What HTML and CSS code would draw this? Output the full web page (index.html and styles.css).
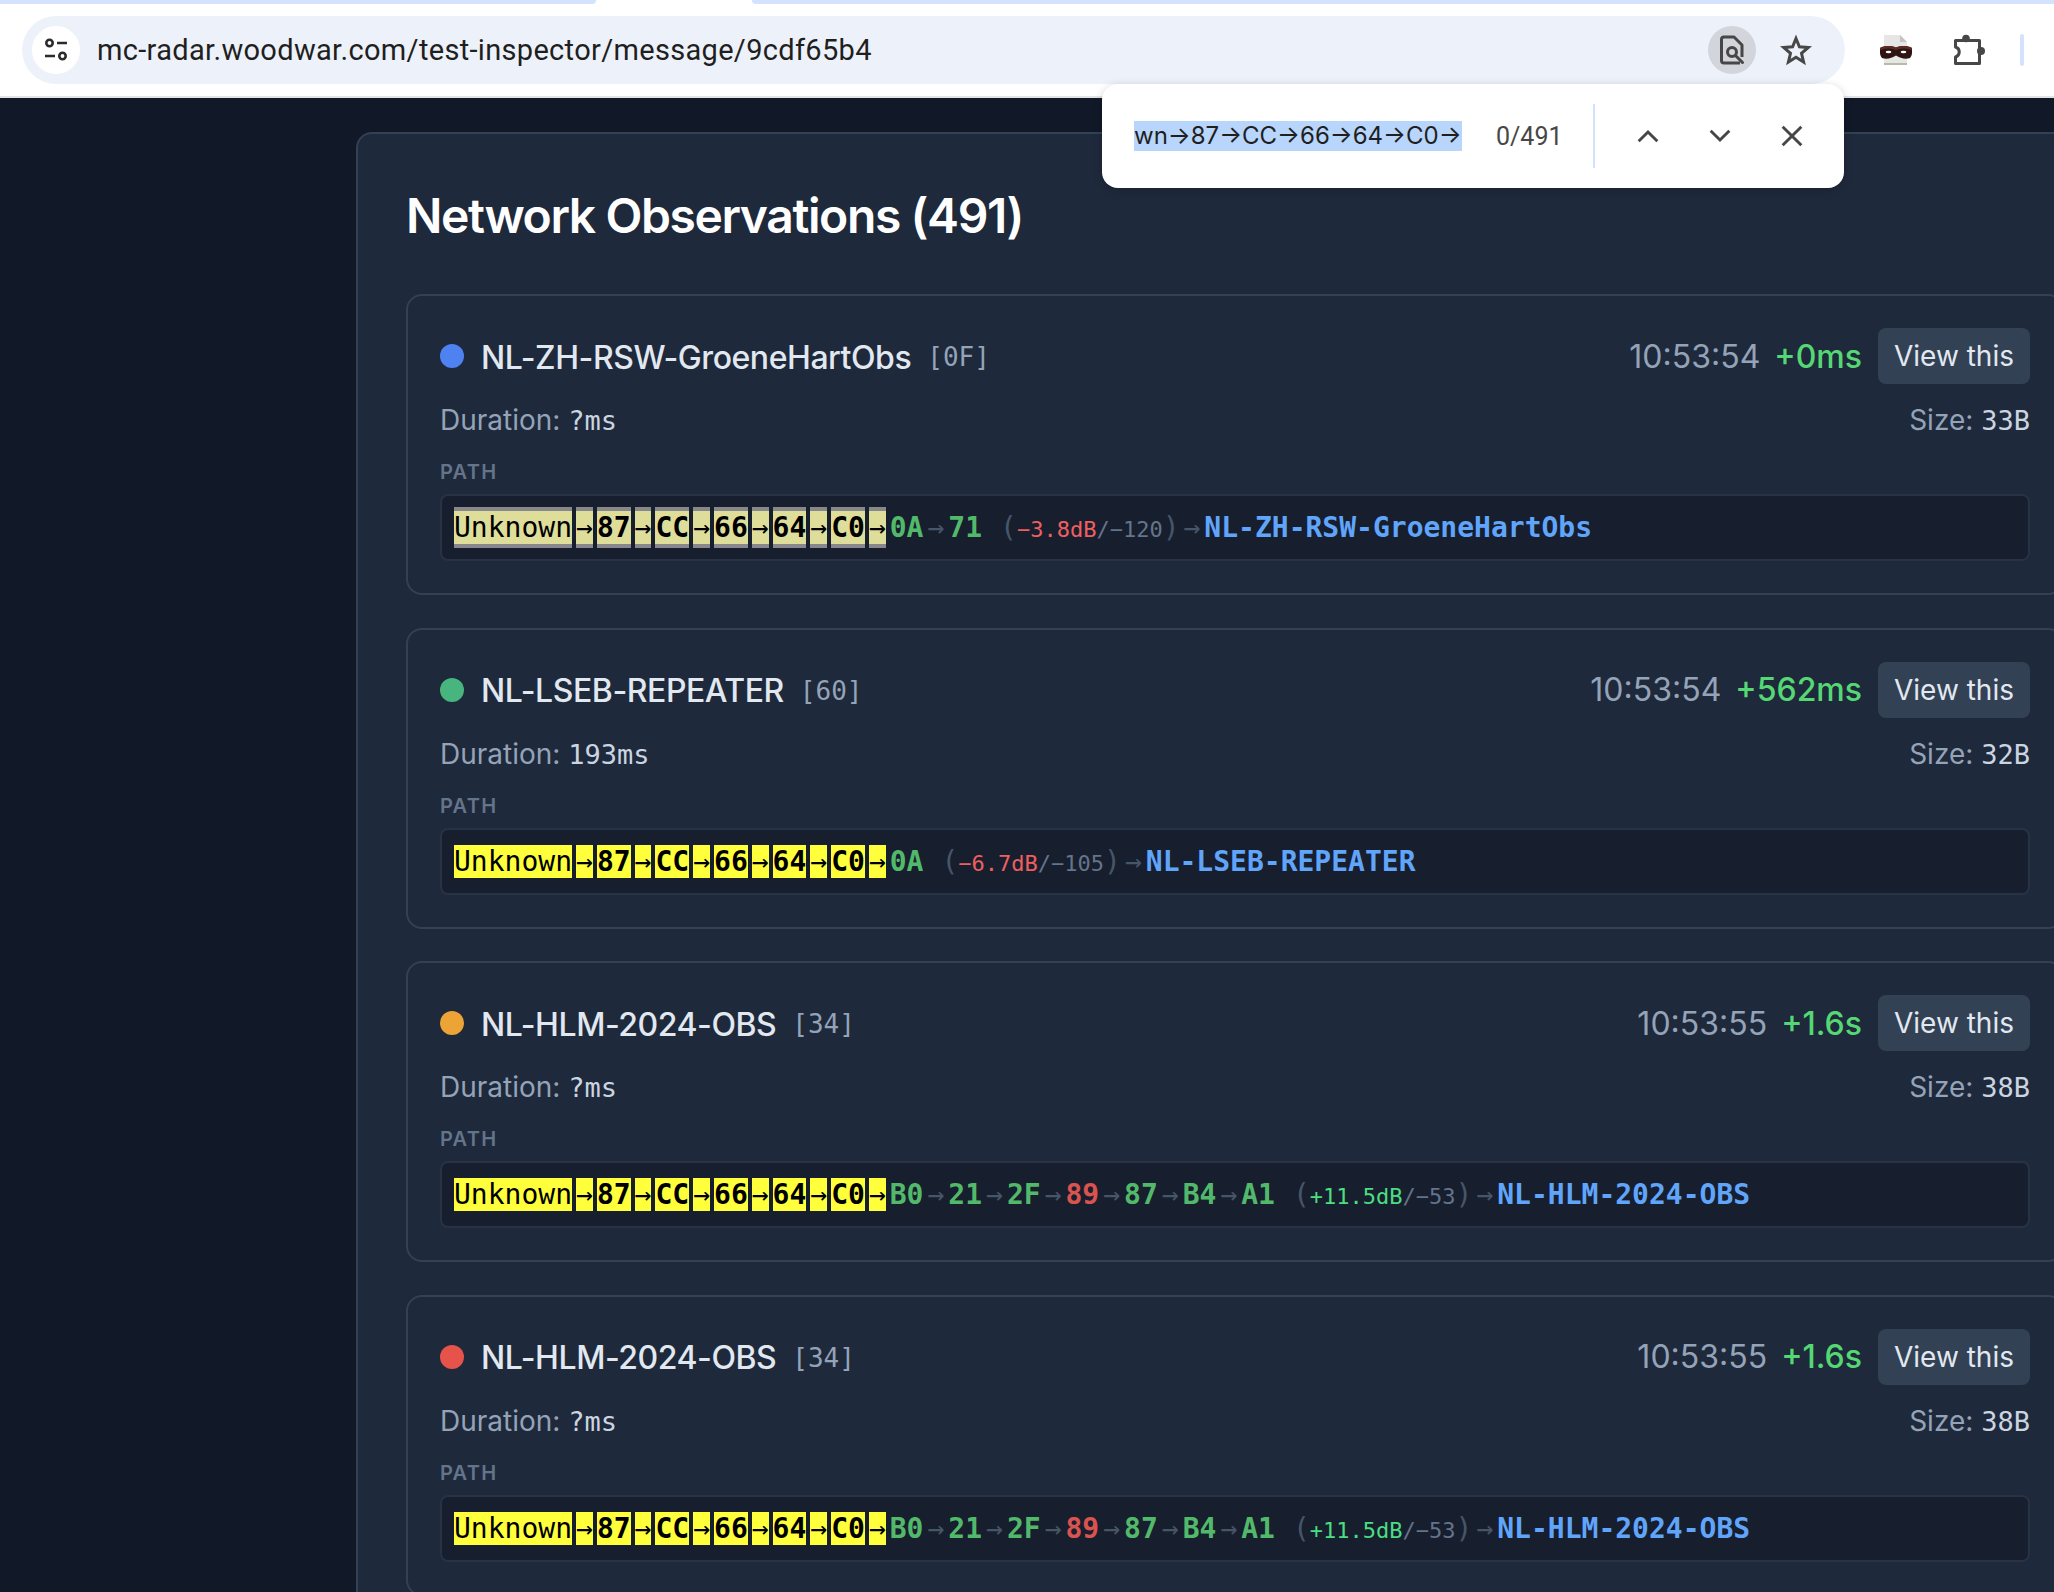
FILE: index.html
```html
<!DOCTYPE html>
<html lang="en">
<head>
    <meta charset="UTF-8">
    <meta name="viewport" content="width=device-width, initial-scale=1.0">
    <title>Test Inspector</title>
    <link rel="stylesheet" href="styles.css">
</head>
<body>
    <div class="tab-strip">
        <div class="tab-left"></div>
        <div class="tab-right"></div>
    </div>

    <header class="toolbar">
        <div class="omnibox">
            <span class="site-info">
                <svg width="24" height="24" viewBox="0 0 24 24" fill="none" stroke="#2b2b2b" stroke-width="2.600">
                    <circle cx="5.500" cy="5" r="3.200"/>
                    <path d="M13 5h10M1 18h10"/>
                    <circle cx="18.500" cy="18" r="3.200"/>
                </svg>
            </span>
            <span class="url">mc-radar.woodwar.com/test-inspector/message/9cdf65b4</span>
            <span class="reader-btn">
                <svg width="28" height="32" viewBox="0 0 28 32" fill="none" stroke="#474747" stroke-width="3" stroke-linejoin="round">
                    <path d="M22 29H6a2.500 2.500 0 0 1-2.500-2.500v-21A2.500 2.500 0 0 1 6 3h10l8 8v12"/>
                    <circle cx="14" cy="18" r="4.500"/>
                    <path d="M17.500 21.500l7 7" stroke-linecap="round"/>
                </svg>
            </span>
            <span class="star-btn">
                <svg width="32" height="32" viewBox="0 0 32 32" fill="none" stroke="#474747" stroke-width="3" stroke-linejoin="miter">
                    <path d="M16 4.500l3.400 8.300 8.900.7-6.800 5.800 2.100 8.700L16 23.300l-7.600 4.700 2.100-8.700-6.800-5.800 8.900-.7z"/>
                </svg>
            </span>
        </div>
        <div class="toolbar-icons">
            <svg class="mask-icon" width="32" height="30" viewBox="0 0 32 30">
                <path d="M4 0h16l7 7v23H4z" fill="#e6e6e6"/>
                <path d="M20 0l7 7h-7z" fill="#c4c4c4"/>
                <rect x="4" y="28" width="23" height="2" fill="#b3bea2"/>
                <path d="M0 13c5-2.500 10-2.500 16-.5 6-2 11-2 16 .5 .5 4 0 8-2 10-4 1.500-10 .5-14-2.500-4 3-10 4-14 2.500-2-2-2.500-6-2-10z" fill="#2f1512"/>
                <path d="M0 13c5-2.500 10-2.500 16-.5 6-2 11-2 16 .5v2c-5-2-10-2-16 0-6-2-11-2-16 0z" fill="#5a2a26"/>
                <ellipse cx="8.500" cy="17" rx="2.800" ry="1.300" fill="#fff"/>
                <ellipse cx="23.500" cy="17" rx="2.800" ry="1.300" fill="#fff"/>
            </svg>
            <svg class="puzzle-icon" width="34" height="32" viewBox="0 0 34 32">
                <path d="M3.500 6.500h24v23h-24v-6.500c5-1.500 5-8.500 0-10z" fill="none" stroke="#474747" stroke-width="3" stroke-linejoin="round"/>
                <circle cx="14" cy="4.500" r="3.800" fill="#474747"/>
                <circle cx="29" cy="17" r="4" fill="#474747"/>
            </svg>
            <span class="toolbar-divider"></span>
        </div>
    </header>

    <div class="find-bar">
        <span class="find-query"><span class="find-selected">wn→87→CC→66→64→C0→</span></span>
        <span class="find-count">0/491</span>
        <span class="find-divider"></span>
        <span class="find-btn">
            <svg width="32" height="32" viewBox="0 0 24 24" fill="none" stroke="#474747" stroke-width="2.200"><path d="M5 16l7-7 7 7"/></svg>
        </span>
        <span class="find-btn">
            <svg width="32" height="32" viewBox="0 0 24 24" fill="none" stroke="#474747" stroke-width="2.200"><path d="M5 8l7 7 7-7"/></svg>
        </span>
        <span class="find-btn">
            <svg width="32" height="32" viewBox="0 0 24 24" fill="none" stroke="#474747" stroke-width="2.200"><path d="M5 5l14 14M19 5L5 19"/></svg>
        </span>
    </div>

    <main class="panel">
        <h2 class="panel-title">Network Observations (491)</h2>

        <section class="obs-card">
            <div class="obs-head">
                <span class="dot dot-blue"></span>
                <span class="obs-name">NL-ZH-RSW-GroeneHartObs</span>
                <span class="obs-id">[0F]</span>
                <span class="obs-time">10:53:54</span>
                <span class="obs-delta">+0ms</span>
                <button class="view-btn">View this</button>
            </div>
            <div class="obs-meta">
                <span>Duration: <span class="meta-val">?ms</span></span>
                <span>Size: <span class="meta-val">33B</span></span>
            </div>
            <div class="path-label">PATH</div>
            <div class="path-box">
                <span class="hit dim">Unknown</span><span class="hit dim">→</span>
                <span class="hit dim hop">87</span><span class="hit dim">→</span>
                <span class="hit dim hop">CC</span><span class="hit dim">→</span>
                <span class="hit dim hop">66</span><span class="hit dim">→</span>
                <span class="hit dim hop">64</span><span class="hit dim">→</span>
                <span class="hit dim hop">C0</span><span class="hit dim">→</span>
                <span class="hop good">0A</span><span class="arrow">→</span>
                <span class="hop good">71</span>
                <span class="snr">(<span class="snr-bad">−3.8dB</span><span class="snr-rest">/−120</span>)</span>
                <span class="arrow">→</span>
                <span class="hop dest">NL-ZH-RSW-GroeneHartObs</span>
            </div>
        </section>

        <section class="obs-card">
            <div class="obs-head">
                <span class="dot dot-green"></span>
                <span class="obs-name">NL-LSEB-REPEATER</span>
                <span class="obs-id">[60]</span>
                <span class="obs-time">10:53:54</span>
                <span class="obs-delta">+562ms</span>
                <button class="view-btn">View this</button>
            </div>
            <div class="obs-meta">
                <span>Duration: <span class="meta-val">193ms</span></span>
                <span>Size: <span class="meta-val">32B</span></span>
            </div>
            <div class="path-label">PATH</div>
            <div class="path-box">
                <span class="hit">Unknown</span><span class="hit">→</span>
                <span class="hit hop">87</span><span class="hit">→</span>
                <span class="hit hop">CC</span><span class="hit">→</span>
                <span class="hit hop">66</span><span class="hit">→</span>
                <span class="hit hop">64</span><span class="hit">→</span>
                <span class="hit hop">C0</span><span class="hit">→</span>
                <span class="hop good">0A</span>
                <span class="snr">(<span class="snr-bad">−6.7dB</span><span class="snr-rest">/−105</span>)</span>
                <span class="arrow">→</span>
                <span class="hop dest">NL-LSEB-REPEATER</span>
            </div>
        </section>

        <section class="obs-card">
            <div class="obs-head">
                <span class="dot dot-orange"></span>
                <span class="obs-name">NL-HLM-2024-OBS</span>
                <span class="obs-id">[34]</span>
                <span class="obs-time">10:53:55</span>
                <span class="obs-delta">+1.6s</span>
                <button class="view-btn">View this</button>
            </div>
            <div class="obs-meta">
                <span>Duration: <span class="meta-val">?ms</span></span>
                <span>Size: <span class="meta-val">38B</span></span>
            </div>
            <div class="path-label">PATH</div>
            <div class="path-box">
                <span class="hit">Unknown</span><span class="hit">→</span>
                <span class="hit hop">87</span><span class="hit">→</span>
                <span class="hit hop">CC</span><span class="hit">→</span>
                <span class="hit hop">66</span><span class="hit">→</span>
                <span class="hit hop">64</span><span class="hit">→</span>
                <span class="hit hop">C0</span><span class="hit">→</span>
                <span class="hop good">B0</span><span class="arrow">→</span>
                <span class="hop good">21</span><span class="arrow">→</span>
                <span class="hop good">2F</span><span class="arrow">→</span>
                <span class="hop bad">89</span><span class="arrow">→</span>
                <span class="hop good">87</span><span class="arrow">→</span>
                <span class="hop good">B4</span><span class="arrow">→</span>
                <span class="hop good">A1</span>
                <span class="snr">(<span class="snr-good">+11.5dB</span><span class="snr-rest">/−53</span>)</span>
                <span class="arrow">→</span>
                <span class="hop dest">NL-HLM-2024-OBS</span>
            </div>
        </section>

        <section class="obs-card">
            <div class="obs-head">
                <span class="dot dot-red"></span>
                <span class="obs-name">NL-HLM-2024-OBS</span>
                <span class="obs-id">[34]</span>
                <span class="obs-time">10:53:55</span>
                <span class="obs-delta">+1.6s</span>
                <button class="view-btn">View this</button>
            </div>
            <div class="obs-meta">
                <span>Duration: <span class="meta-val">?ms</span></span>
                <span>Size: <span class="meta-val">38B</span></span>
            </div>
            <div class="path-label">PATH</div>
            <div class="path-box">
                <span class="hit">Unknown</span><span class="hit">→</span>
                <span class="hit hop">87</span><span class="hit">→</span>
                <span class="hit hop">CC</span><span class="hit">→</span>
                <span class="hit hop">66</span><span class="hit">→</span>
                <span class="hit hop">64</span><span class="hit">→</span>
                <span class="hit hop">C0</span><span class="hit">→</span>
                <span class="hop good">B0</span><span class="arrow">→</span>
                <span class="hop good">21</span><span class="arrow">→</span>
                <span class="hop good">2F</span><span class="arrow">→</span>
                <span class="hop bad">89</span><span class="arrow">→</span>
                <span class="hop good">87</span><span class="arrow">→</span>
                <span class="hop good">B4</span><span class="arrow">→</span>
                <span class="hop good">A1</span>
                <span class="snr">(<span class="snr-good">+11.5dB</span><span class="snr-rest">/−53</span>)</span>
                <span class="arrow">→</span>
                <span class="hop dest">NL-HLM-2024-OBS</span>
            </div>
        </section>
    </main>
</body>
</html>
```

FILE: styles.css
```css
html, body {
    margin: 0;
    height: 100%;
    overflow: hidden;
}
body {
    background-color: #111827;
    font-family: Inter, "Liberation Sans", sans-serif;
    color: #e2e8f0;
}

/* browser chrome */
.tab-strip {
    display: flex;
    justify-content: space-between;
    height: 4px;
    background-color: #fff;
}
.tab-left {
    width: 596px;
    background-color: #d3e3fd;
    border-bottom-right-radius: 8px;
}
.tab-right {
    width: 1302px;
    background-color: #d3e3fd;
    border-bottom-left-radius: 8px;
}
.toolbar {
    display: flex;
    align-items: center;
    height: 92px;
    padding-left: 22px;
    background-color: #fff;
    border-bottom: 2px solid #e2e4e6;
}
.omnibox {
    display: flex;
    align-items: center;
    width: 1823px;
    height: 68px;
    padding-left: 10px;
    padding-right: 33px;
    box-sizing: border-box;
    background-color: #edf2fa;
    border-radius: 34px;
}
.site-info {
    display: flex;
    align-items: center;
    justify-content: center;
    width: 48px;
    height: 48px;
    background-color: #fff;
    border-radius: 50%;
}
.url {
    flex: 1;
    margin-left: 17px;
    font-family: Roboto, sans-serif;
    font-size: 29px;
    letter-spacing: 0.320px;
    color: #1f1f1f;
}
.reader-btn {
    display: flex;
    align-items: center;
    justify-content: center;
    width: 48px;
    height: 48px;
    background-color: #d2d5db;
    border-radius: 50%;
}
.star-btn {
    display: flex;
    margin-left: 24px;
}
.toolbar-icons {
    display: flex;
    align-items: center;
    margin-left: 35px;
}
.puzzle-icon {
    margin-left: 40px;
}
.toolbar-divider {
    width: 4px;
    height: 32px;
    margin-left: 34px;
    background-color: #d3e3fd;
    border-radius: 2px;
}

/* find in page popup */
.find-bar {
    position: absolute;
    top: 84px;
    left: 1102px;
    display: flex;
    align-items: center;
    width: 742px;
    height: 104px;
    padding-left: 32px;
    box-sizing: border-box;
    background-color: #fff;
    border-radius: 16px;
    box-shadow: 0 2px 10px rgba(0,0,0,0.18);
    font-family: Inter, sans-serif;
    font-size: 24px;
}
.find-query {
    width: 328px;
}
.find-selected {
    display: block;
    width: 328px;
    line-height: 30px;
    background-color: #b8d5fb;
    color: #1f1f1f;
    white-space: nowrap;
    overflow: hidden;
}
.find-count {
    margin-left: 34px;
    font-family: Roboto, sans-serif;
    font-size: 25px;
    color: #474747;
}
.find-divider {
    width: 2px;
    height: 64px;
    margin-left: 30px;
    margin-right: 17px;
    background-color: #d3e3fd;
}
.find-btn {
    display: flex;
    justify-content: center;
    width: 72px;
}

/* page */
.panel {
    width: 1758px;
    margin-top: 34px;
    margin-left: 356px;
    padding: 48px 48px 0;
    box-sizing: border-box;
    background-color: #1e293b;
    border: 2px solid #334155;
    border-radius: 16px;
}
.panel-title {
    margin: 0 0 44px;
    font-size: 48px;
    font-weight: 600;
    letter-spacing: -1.400px;
    line-height: 68px;
    color: #fff;
}
.obs-card {
    margin-bottom: 32.500px;
    padding: 32px;
    background-color: #1e293b;
    border: 2px solid #334155;
    border-radius: 16px;
}
.obs-head {
    display: flex;
    align-items: center;
    height: 56px;
}
.dot {
    width: 24px;
    height: 24px;
    border-radius: 50%;
}
.dot-blue { background-color: #4f82f1; }
.dot-green { background-color: #48b47e; }
.dot-orange { background-color: #eda436; }
.dot-red { background-color: #e5534b; }
.obs-name {
    margin-left: 17px;
    padding-top: 2px;
    font-size: 32px;
    font-weight: 500;
    letter-spacing: -0.450px;
    color: #e2e8f0;
}
.obs-id {
    margin-left: 16px;
    padding-top: 2px;
    font-family: "DejaVu Sans Mono", monospace;
    font-size: 26px;
    color: #94a3b8;
}
.obs-time {
    margin-left: auto;
    font-size: 32px;
    color: #94a3b8;
}
.obs-delta {
    margin-left: 14px;
    font-size: 32px;
    font-weight: 500;
    color: #55d873;
}
.view-btn {
    height: 56px;
    width: 152px;
    margin-left: 16px;
    padding: 0;
    background-color: #334155;
    border: none;
    border-radius: 8px;
    font-family: Inter, sans-serif;
    font-size: 28px;
    color: #e2e8f0;
}
.obs-meta {
    display: flex;
    justify-content: space-between;
    height: 32px;
    margin-top: 20px;
    line-height: 32px;
    font-size: 28px;
    color: #94a3b8;
}
.meta-val {
    font-family: "DejaVu Sans Mono", monospace;
    font-size: 27px;
    color: #cbd5e1;
}
.path-label {
    margin-top: 24px;
    line-height: 24px;
    font-size: 20px;
    font-weight: 600;
    letter-spacing: 1.300px;
    color: #64748b;
}
.path-box {
    display: flex;
    align-items: baseline;
    gap: 4px;
    margin-top: 10px;
    padding: 15px 12px;
    background-color: #171e2e;
    border: 2px solid #273345;
    border-radius: 8px;
    font-family: "DejaVu Sans Mono", monospace;
    font-size: 28px;
    white-space: nowrap;
}
.hit {
    background-color: #ffff3c;
    color: #000;
}
.hit.dim {
    background-color: #dfdd9a;
    box-shadow: 0 -4px 0 #88888c, 0 4px 0 #88888c;
}
.hop {
    font-weight: 700;
}
.good { color: #53b96a; }
.bad { color: #d9534f; }
.dest { color: #60a5fa; }
.arrow { color: #475569; }
.snr {
    margin-left: 14px;
    color: #475569;
}
.snr span {
    font-size: 22px;
}
.snr-bad { color: #ef5f5f; }
.snr-good { color: #4ade80; }
.snr-rest { color: #64748b; }
```
